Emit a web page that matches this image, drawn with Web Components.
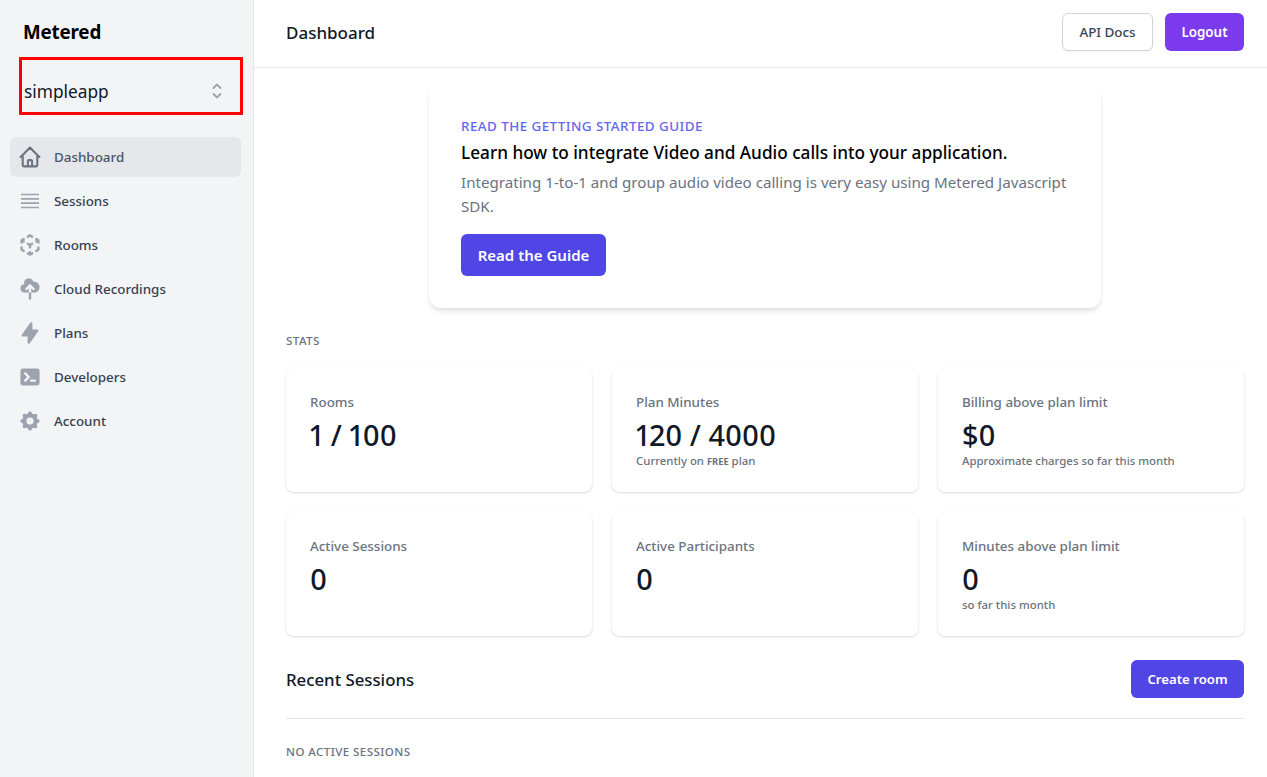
<!DOCTYPE html>
<html>
<head>
<meta charset="utf-8">
<title>Dashboard</title>
<style>
  html, body { margin: 0; height: 100%; overflow: hidden; background: #fff; }
  body { font-family: "Noto Sans", "Open Sans", sans-serif; color: #111827; }
</style>
</head>
<body>
<app-shell>
  <side-bar slot="side">
    <nav-item icon="home" active>Dashboard</nav-item>
    <nav-item icon="sessions">Sessions</nav-item>
    <nav-item icon="rooms">Rooms</nav-item>
    <nav-item icon="cloud">Cloud Recordings</nav-item>
    <nav-item icon="bolt">Plans</nav-item>
    <nav-item icon="terminal">Developers</nav-item>
    <nav-item icon="cog">Account</nav-item>
  </side-bar>
  <top-bar slot="top"></top-bar>
  <guide-card></guide-card>
  <stats-grid>
    <stat-card label="Rooms" value="1 / 100"></stat-card>
    <stat-card label="Plan Minutes" value="120 / 4000">Currently on <span style="font-variant:small-caps;font-weight:600">free</span> plan</stat-card>
    <stat-card label="Billing above plan limit" value="$0">Approximate charges so far this month</stat-card>
    <stat-card label="Active Sessions" value="0"></stat-card>
    <stat-card label="Active Participants" value="0"></stat-card>
    <stat-card label="Minutes above plan limit" value="0">so far this month</stat-card>
  </stats-grid>
  <recent-sessions></recent-sessions>
</app-shell>

<script>
const ICONS = {
  home: `<svg viewBox="0.5 0.5 23 23" fill="none" stroke="#6b7280" stroke-width="2" stroke-linecap="round" stroke-linejoin="round"><path d="M3 12l2-2m0 0l7-7 7 7M5 10v10a1 1 0 001 1h3m10-11l2 2m-2-2v10a1 1 0 01-1 1h-3m-6 0a1 1 0 001-1v-4a1 1 0 011-1h2a1 1 0 011 1v4a1 1 0 001 1m-6 0h6"/></svg>`,
  sessions: `<svg viewBox="0 0 24 24" fill="none" stroke="#9ca3af" stroke-width="1.700"><path d="M3 5.500h18M3 9.800h18M3 14.200h18M3 18.500h18"/></svg>`,
  rooms: `<svg viewBox="0 0 20 20" fill="#9ca3af"><path fill-rule="evenodd" clip-rule="evenodd" d="M9.504 1.132a1 1 0 01.992 0l1.750 1a1 1 0 11-.992 1.736L10 3.152l-1.254.716a1 1 0 11-.992-1.736l1.750-1zM5.618 4.504a1 1 0 01-.372 1.364L5.016 6l.230.132a1 1 0 11-.992 1.736L4 7.723V8a1 1 0 01-2 0V6a.996.996 0 01.520-.878l1.734-.990a1 1 0 011.364.372zm8.764 0a1 1 0 011.364-.372l1.733.990A1.002 1.002 0 0118 6v2a1 1 0 11-2 0v-.277l-.254.145a1 1 0 11-.992-1.736l.230-.132-.230-.132a1 1 0 01-.372-1.364zm-7 4a1 1 0 011.364-.372L10 8.848l1.254-.716a1 1 0 11.992 1.736L11 10.580V12a1 1 0 11-2 0v-1.420l-1.246-.712a1 1 0 01-.372-1.364zM3 11a1 1 0 011 1v1.420l1.246.712a1 1 0 11-.992 1.736l-1.750-1A1 1 0 012 14v-2a1 1 0 011-1zm14 0a1 1 0 011 1v2a1 1 0 01-.504.868l-1.750 1a1 1 0 11-.992-1.736L16 13.420V12a1 1 0 011-1zm-9.618 5.504a1 1 0 011.364-.372l.254.145V16a1 1 0 112 0v.277l.254-.145a1 1 0 11.992 1.736l-1.735.992a.995.995 0 01-1.022 0l-1.735-.992a1 1 0 01-.372-1.364z"/></svg>`,
  cloud: `<svg viewBox="0 0 20 20" fill="#9ca3af"><path d="M5.500 13a3.500 3.500 0 01-.369-6.980 4 4 0 117.753-1.977A4.500 4.500 0 1113.500 13H11V9.413l1.293 1.293a1 1 0 001.414-1.414l-3-3a1 1 0 00-1.414 0l-3 3a1 1 0 001.414 1.414L9 9.414V13H5.500z"/><path d="M9 13h2v5a1 1 0 11-2 0v-5z"/></svg>`,
  bolt: `<svg viewBox="0 0 20 20" fill="#9ca3af"><path fill-rule="evenodd" clip-rule="evenodd" d="M11.300 1.046A1 1 0 0112 2v5h4a1 1 0 01.820 1.573l-7 10A1 1 0 018 18v-5H4a1 1 0 01-.820-1.573l7-10a1 1 0 011.120-.381z"/></svg>`,
  terminal: `<svg viewBox="0 0 20 20" fill="#9ca3af"><path fill-rule="evenodd" clip-rule="evenodd" d="M2 5a2 2 0 012-2h12a2 2 0 012 2v10a2 2 0 01-2 2H4a2 2 0 01-2-2V5zm3.293 1.293a1 1 0 011.414 0l3 3a1 1 0 010 1.414l-3 3a1 1 0 01-1.414-1.414L7.586 10 5.293 7.707a1 1 0 010-1.414zM11 12a1 1 0 100 2h3a1 1 0 100-2h-3z"/></svg>`,
  cog: `<svg viewBox="0 0 20 20" fill="#9ca3af"><path fill-rule="evenodd" clip-rule="evenodd" d="M11.490 3.170c-.380-1.560-2.600-1.560-2.980 0a1.532 1.532 0 01-2.286.948c-1.372-.836-2.942.734-2.106 2.106.540.886.061 2.042-.947 2.287-1.561.379-1.561 2.600 0 2.978a1.532 1.532 0 01.947 2.287c-.836 1.372.734 2.942 2.106 2.106a1.532 1.532 0 012.287.947c.379 1.561 2.600 1.561 2.978 0a1.533 1.533 0 012.287-.947c1.372.836 2.942-.734 2.106-2.106a1.533 1.533 0 01.947-2.287c1.561-.379 1.561-2.600 0-2.978a1.532 1.532 0 01-.947-2.287c.836-1.372-.734-2.942-2.106-2.106a1.532 1.532 0 01-2.287-.947zM10 13a3 3 0 100-6 3 3 0 000 6z"/></svg>`
};

class AppShell extends HTMLElement {
  constructor() {
    super();
    this.attachShadow({ mode: "open" });
    this.shadowRoot.innerHTML = `
      <style>
        :host { display: flex; height: 777px; }
        .content { flex: 1; min-width: 0; display: flex; flex-direction: column; }
        main { padding: 17px 23px 0 32px; }
      </style>
      <slot name="side"></slot>
      <div class="content">
        <slot name="top"></slot>
        <main><slot></slot></main>
      </div>
    `;
  }
}

class SideBar extends HTMLElement {
  constructor() {
    super();
    this.attachShadow({ mode: "open" });
    this.shadowRoot.innerHTML = `
      <style>
        :host {
          display: block; width: 253px; flex: none; height: 777px;
          background: #f3f4f6; border-right: 1px solid #e5e7eb;
        }
        .brand { margin: 0; padding: 18px 0 0 23px; font-size: 18.8px; line-height: 28px; font-weight: 700; color: #000; letter-spacing: -.01em; }
        .picker {
          margin: 11px 0 0 19px; box-sizing: border-box; width: 224px; height: 58px;
          border: 3px solid #f00; border-radius: 1px;
          display: flex; align-items: center; justify-content: space-between;
          padding: 10px 16px 0 2px;
          font-size: 17.3px; color: #111827;
        }
        .picker svg { width: 14px; height: 20px; display: block; }
        nav { margin: 22px 0 0 10px; width: 231px; display: flex; flex-direction: column; gap: 4px; }
      </style>
      <h1 class="brand">Metered</h1>
      <div class="picker">
        <span>simpleapp</span>
        <svg viewBox="0 0 14 20" fill="none" stroke="#9ca3af" stroke-width="1.800" stroke-linecap="round" stroke-linejoin="round"><path d="M3.500 7L7 3.500 10.500 7M3.500 13L7 16.500 10.500 13"/></svg>
      </div>
      <nav><slot></slot></nav>
    `;
  }
}

class NavItem extends HTMLElement {
  constructor() {
    super();
    this.attachShadow({ mode: "open" });
  }
  connectedCallback() {
    const active = this.hasAttribute("active");
    this.shadowRoot.innerHTML = `
      <style>
        :host { display: flex; align-items: center; height: 40px; padding-left: 8px; border-radius: 6px;
          font-size: 13.4px; font-weight: 500; color: ${active ? "#4b5563" : "#374151"}; background: ${active ? "#e5e7eb" : "transparent"}; }
        .icon { width: 24px; height: 24px; margin-right: 12px; flex: none; }
        .icon svg { width: 24px; height: 24px; display: block; }
      </style>
      <span class="icon">${ICONS[this.getAttribute("icon")]}</span>
      <slot></slot>
    `;
  }
}

class TopBar extends HTMLElement {
  constructor() {
    super();
    this.attachShadow({ mode: "open" });
    this.shadowRoot.innerHTML = `
      <style>
        :host {
          display: flex; align-items: center; justify-content: space-between;
          height: 67px; padding: 0 23px 0 32px; border-bottom: 1px solid #e5e7eb; box-sizing: content-box;
        }
        h2 { margin: -2px 0 0; font-size: 17px; font-weight: 500; color: #111827; }
        .actions { display: flex; gap: 12px; margin-top: -3px; }
        button {
          font: inherit; font-size: 13.4px; font-weight: 500; height: 38px; width: 91px; padding: 0;
          border-radius: 6px; box-sizing: border-box;
        }
        .ghost { background: #fff; color: #374151; border: 1px solid #d1d5db; box-shadow: 0 1px 2px rgba(0,0,0,.05); }
        .solid { width: 79px; background: #7c3aed; color: #fff; border: 0; font-weight: 600; }
      </style>
      <h2>Dashboard</h2>
      <div class="actions">
        <button class="ghost">API Docs</button>
        <button class="solid">Logout</button>
      </div>
    `;
  }
}

class GuideCard extends HTMLElement {
  constructor() {
    super();
    this.attachShadow({ mode: "open" });
    this.shadowRoot.innerHTML = `
      <style>
        :host {
          display: block; box-sizing: border-box; width: 672px; height: 223px; margin: 0 auto;
          padding: 31px 32px 0; background: #fff; border-radius: 12px;
          box-shadow: 0 4px 6px -1px rgba(0,0,0,.1), 0 2px 4px -1px rgba(0,0,0,.06);
        }
        .eyebrow { font-size: 13.4px; line-height: 20px; font-weight: 500; letter-spacing: .45px; color: #6366f1; text-transform: uppercase; }
        h3 { margin: 3px 0 0; font-size: 17.2px; line-height: 28px; font-weight: 500; color: #000; }
        p { margin: 3px 0 0; font-size: 15.15px; line-height: 24px; color: #6b7280; }
        button {
          display: block; margin-top: 16px; height: 42px; width: 145px; padding: 0; border: 0; border-radius: 6px;
          background: #4f46e5; color: #fff; font: inherit; font-size: 15px; font-weight: 600;
        }
      </style>
      <div class="eyebrow">Read the getting started guide</div>
      <h3>Learn how to integrate Video and Audio calls into your application.</h3>
      <p>Integrating 1-to-1 and group audio video calling is very easy using Metered Javascript SDK.</p>
      <button>Read the Guide</button>
    `;
  }
}

class StatsGrid extends HTMLElement {
  constructor() {
    super();
    this.attachShadow({ mode: "open" });
    this.shadowRoot.innerHTML = `
      <style>
        :host { display: block; margin-top: 25px; }
        h4 { margin: 0; font-size: 11.6px; line-height: 16px; font-weight: 500; letter-spacing: .4px; color: #6b7280; text-transform: uppercase; }
        .grid { display: grid; grid-template-columns: repeat(3, 1fr); gap: 20px; margin-top: 19px; }
      </style>
      <h4>Stats</h4>
      <div class="grid"><slot></slot></div>
    `;
  }
}

class StatCard extends HTMLElement {
  constructor() {
    super();
    this.attachShadow({ mode: "open" });
  }
  connectedCallback() {
    this.shadowRoot.innerHTML = `
      <style>
        :host {
          display: block; box-sizing: border-box; height: 124px; padding: 24px;
          background: #fff; border-radius: 8px;
          box-shadow: 0 1px 3px 0 rgba(0,0,0,.1), 0 1px 2px 0 rgba(0,0,0,.06);
        }
        .label { font-size: 13.4px; line-height: 20px; font-weight: 500; color: #6b7280; }
        .value { font-size: 28.8px; line-height: 36px; font-weight: 500; color: #111827; margin-top: 5px; font-variant-numeric: proportional-nums; }
        .note { font-size: 11.4px; line-height: 16px; font-weight: 500; color: #6b7280; margin-top: 0; }
      </style>
      <div class="label">${this.getAttribute("label")}</div>
      <div class="value">${this.getAttribute("value")}</div>
      <div class="note"><slot></slot></div>
    `;
  }
}

class RecentSessions extends HTMLElement {
  constructor() {
    super();
    this.attachShadow({ mode: "open" });
    this.shadowRoot.innerHTML = `
      <style>
        :host { display: block; margin-top: 24px; }
        .head { display: flex; align-items: center; justify-content: space-between; padding-bottom: 20px; border-bottom: 1px solid #e5e7eb; }
        h3 { margin: 0; font-size: 16.8px; font-weight: 500; color: #111827; }
        button {
          height: 38px; width: 113px; padding: 0; border: 0; border-radius: 6px;
          background: #4f46e5; color: #fff; font: inherit; font-size: 13.2px; font-weight: 600;
        }
        .empty { margin-top: 25px; font-size: 11.6px; line-height: 16px; font-weight: 500; letter-spacing: .4px; color: #6b7280; text-transform: uppercase; }
      </style>
      <div class="head">
        <h3>Recent Sessions</h3>
        <button>Create room</button>
      </div>
      <div class="empty">No active sessions</div>
    `;
  }
}

customElements.define("app-shell", AppShell);
customElements.define("side-bar", SideBar);
customElements.define("nav-item", NavItem);
customElements.define("top-bar", TopBar);
customElements.define("guide-card", GuideCard);
customElements.define("stats-grid", StatsGrid);
customElements.define("stat-card", StatCard);
customElements.define("recent-sessions", RecentSessions);
</script>
</body>
</html>
